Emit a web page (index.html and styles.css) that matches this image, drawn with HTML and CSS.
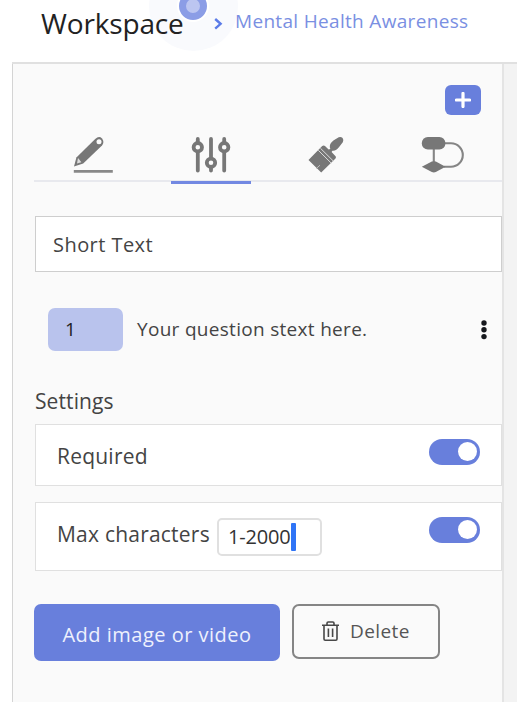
FILE: index.html
```html
<!DOCTYPE html>
<html lang="en">

<head>
    <meta charset="utf-8">
    <meta name="viewport" content="width=device-width, initial-scale=1">
    <title>Workspace</title>
    <link rel="stylesheet" href="styles.css">
</head>

<body>
    <header class="topbar">
        <h1>Workspace</h1>
        <span class="beacon"></span>
        <svg class="chevron" width="9" height="12" viewBox="0 0 9 12"><path d="M1.2 1 L6.6 5.8 L1.2 10.6" fill="none" stroke="#5b7be8" stroke-width="2.4"/></svg>
        <a class="crumb">Mental Health Awareness</a>
    </header>

    <main class="main">
        <section class="panel">
            <div class="add-row">
                <button class="add-btn" aria-label="Add">
                    <svg width="16" height="16" viewBox="0 0 16 16"><path d="M8 1.4v13.2M1.4 8h13.2" stroke="#fff" stroke-width="3.2" stroke-linecap="round"/></svg>
                </button>
            </div>

            <nav class="tabs">
                <a class="tab tab-edit">
                    <svg width="40" height="38" viewBox="0 0 40 38">
                        <path d="M1 30.4 L3.4 21.4 L22.2 3 Q26 -.6 29 2.4 Q31.8 6 29 9.4 L10.2 27.4 Z" fill="#777"/>
                        <circle cx="26" cy="5.8" r="2.5" fill="#fafafa"/>
                        <path d="M5 22 L8.4 26.2 L4 27.4 Z" fill="#ddd"/>
                        <path d="M.8 35.4h39" stroke="#888" stroke-width="2.6"/>
                    </svg>
                </a>
                <a class="tab tab-settings active">
                    <svg width="40" height="38" viewBox="0 0 40 38">
                        <g fill="none" stroke="#777" stroke-width="3.8" stroke-linecap="round">
                            <path d="M6.8 3v3M6.8 16v18.5M20 3v18M20 32v2.5M33.2 3v3M33.2 16v18.5"/>
                            <circle cx="6.8" cy="11.2" r="4.2"/>
                            <circle cx="20" cy="26.8" r="4.2"/>
                            <circle cx="33.2" cy="11.2" r="4.2"/>
                        </g>
                    </svg>
                </a>
                <a class="tab tab-design">
                    <svg width="36" height="38" viewBox="0 0 36 38">
                        <path d="M22.3 13 Q20.5 8.6 25.4 4.6 L30.7 1.2 Q33 .3 34.6 2 Q36 3.8 34.8 6.2 L31.3 10.8 Q28 15.4 24.4 14.8 L23.6 16 L27.8 20.5 Q28.4 22 27 23 L13.2 36.6 L.5 24 L14.2 10 Q15.8 8.8 17 10 L20.6 13.4 Z" fill="#777"/>
                        <path d="M12.4 12.2 L25.3 25 M10.3 14.3 L23.2 27.1" stroke="#dcdcdc" stroke-width="1"/>
                        <path d="M8.4 32.4 L12 29.2" stroke="#bbb" stroke-width="1"/>
                    </svg>
                </a>
                <a class="tab tab-logic">
                    <svg width="44" height="38" viewBox="0 0 44 38">
                        <g fill="none" stroke="#858585" stroke-width="2.1">
                            <path d="M12.8 11v16M23 7.2h7a11.8 11.8 0 0 1 0 23.6H23"/>
                        </g>
                        <rect x=".8" y="1" width="23.6" height="12.4" rx="6" fill="#777"/>
                        <path d="M.8 30.8 L10.8 25.6 Q12.8 24.8 14.8 25.6 L24.6 30.8 L14.8 36 Q12.8 36.9 10.8 36 Z" fill="#777"/>
                    </svg>
                </a>
            </nav>

            <div class="type-box">Short Text</div>

            <div class="question">
                <span class="number">1</span>
                <span class="question-text">Your question stext here.</span>
                <svg class="dots" width="6" height="20" viewBox="0 0 6 20" fill="#16181d"><circle cx="3" cy="3" r="2.7"/><circle cx="3" cy="9.8" r="2.7"/><circle cx="3" cy="16.6" r="2.7"/></svg>
            </div>

            <h2>Settings</h2>
            <div class="setting required">
                <span class="label">Required</span>
                <span class="switch"></span>
            </div>
            <div class="setting max">
                <span class="label">Max characters</span>
                <div class="limit"><span>1-2000</span><i class="caret"></i></div>
                <span class="switch"></span>
            </div>

            <div class="actions">
                <button class="btn-media">Add image or video</button>
                <button class="btn-delete">
                    <svg width="17" height="20" viewBox="0 0 17 20" fill="none" stroke="#484848" stroke-width="1.6">
                        <path d="M0 4.2h17M5 4V2.2q0-1.2 1.2-1.2h4.6q1.2 0 1.2 1.2V4M2 4.5V18q0 1.2 1.2 1.2h10.6q1.2 0 1.2-1.2V4.5M6.4 7.5v8.5M10.6 7.5v8.5"/>
                    </svg>
                    <span>Delete</span>
                </button>
            </div>
        </section>
    </main>
</body>

</html>
```
FILE: styles.css
```css
*,
*:before {
    box-sizing: border-box;
}

body {
    margin: 0;
    height: 702px;
    overflow: hidden;
    background: #fff;
    color: #444;
    font-family: "Open Sans", "Noto Sans", sans-serif;
    font-size: 20px;
}

button {
    font-family: inherit;
    padding: 0;
    border: 0;
}

.topbar {
    position: relative;
    display: flex;
    height: 62px;
    padding-left: 41px;
}

h1 {
    position: relative;
    z-index: 1;
    width: 142px;
    margin: 4px 0 0;
    font-size: 28px;
    line-height: 38px;
    font-weight: 400;
    letter-spacing: -0.15px;
    color: #222;
    white-space: nowrap;
}

.beacon {
    position: absolute;
    left: 149px;
    top: -38px;
    width: 89px;
    height: 89px;
    border-radius: 50%;
    background: #f9fafd;
}

.beacon:before {
    content: "";
    position: absolute;
    left: 30px;
    top: 30px;
    width: 28px;
    height: 28px;
    border: 7px solid #8b9de6;
    border-radius: 50%;
    background: #bcc6f1;
    box-shadow: 0 0 0 2px #fff;
}

.chevron {
    position: relative;
    margin: 18px 0 0 31px;
}

.crumb {
    position: relative;
    margin: 8px 0 0 12px;
    font-size: 19px;
    line-height: 26px;
    letter-spacing: 0.32px;
    color: #7a8fe2;
    white-space: nowrap;
}

.main {
    height: 640px;
    margin-left: 12px;
    border-top: 2px solid #e0e0e0;
    background: #f3f3f3;
}

.panel {
    width: 492px;
    height: 638px;
    padding-left: 21px;
    border-left: 1px solid #d4d4d4;
    border-right: 2px solid #e4e4e4;
    background: #fafafa;
}

.add-row {
    display: flex;
    justify-content: flex-end;
    padding: 21px 21px 0 0;
}

.add-btn {
    display: flex;
    align-items: center;
    justify-content: center;
    width: 36px;
    height: 30px;
    border-radius: 6px;
    background: #687fdc;
}

.tabs {
    display: flex;
    height: 67px;
    border-bottom: 2px solid #e8e9ee;
}

.tab {
    height: 69px;
    padding-top: 21px;
}

.tab svg {
    display: block;
}

.tab-edit {
    width: 137px;
    padding-left: 39px;
}

.tab-settings {
    width: 80px;
    padding-left: 20px;
}

.tab-design {
    width: 170px;
    padding-left: 57px;
}

.active {
    border-bottom: 3px solid #7288e2;
}

.type-box {
    height: 56px;
    margin: 34px 0 0 1px;
    padding-left: 17px;
    border: 1px solid #cecece;
    background: #fff;
    line-height: 56px;
    letter-spacing: 0.45px;
}

.question {
    display: flex;
    align-items: center;
    height: 43px;
    margin: 36px 15px 0 14px;
}

.number {
    width: 75px;
    height: 43px;
    padding-left: 17px;
    border-radius: 7px;
    background: #b9c3ed;
    color: #222;
    font-size: 19px;
    line-height: 43px;
}

.question-text {
    margin: -2px 0 0 14px;
    font-size: 19px;
    letter-spacing: 0.3px;
}

.dots {
    margin-left: auto;
}

h2 {
    margin: 36px 0 0 1px;
    height: 37px;
    font-size: 21px;
    line-height: 28px;
    font-weight: 400;
    letter-spacing: 0.1px;
}

.setting {
    display: flex;
    height: 62px;
    margin-left: 1px;
    padding: 0 21px;
    border: 1px solid #e0e0e0;
    background: #fff;
}

.label {
    font-size: 21px;
    line-height: 62px;
    letter-spacing: 0.22px;
}

.max {
    height: 69px;
    margin-top: 16px;
}

.limit {
    display: flex;
    align-items: center;
    width: 105px;
    height: 38px;
    margin: 15px 0 0 7px;
    padding-left: 9px;
    border: 2px solid #e0e0e0;
    border-radius: 5px;
    color: #333;
    letter-spacing: -0.15px;
}

.limit span {
    margin-top: -2px;
}

.caret {
    width: 5px;
    height: 28px;
    border-radius: 1px;
    background: #2f74f6;
}

.switch {
    width: 51px;
    height: 26px;
    margin: 14px 0 0 auto;
    padding: 3px 3px 0 29px;
    border-radius: 13px;
    background: #687fdc;
}

.switch:before {
    content: "";
    display: block;
    width: 19px;
    height: 19px;
    border-radius: 50%;
    background: #fff;
}

.actions {
    display: flex;
    gap: 12px;
    margin-top: 33px;
}

.btn-media {
    width: 246px;
    height: 57px;
    padding-top: 4px;
    border-radius: 7px;
    background: #687fdc;
    color: #eef1fd;
    font-size: 20px;
    letter-spacing: 0.5px;
}

.btn-delete {
    display: flex;
    align-items: center;
    width: 148px;
    height: 55px;
    padding: 0 0 2px 28px;
    gap: 11px;
    border: 2px solid #858585;
    border-radius: 7px;
    background: #fafafa;
    color: #555;
    font-size: 19px;
    letter-spacing: 0.4px;
}
```
